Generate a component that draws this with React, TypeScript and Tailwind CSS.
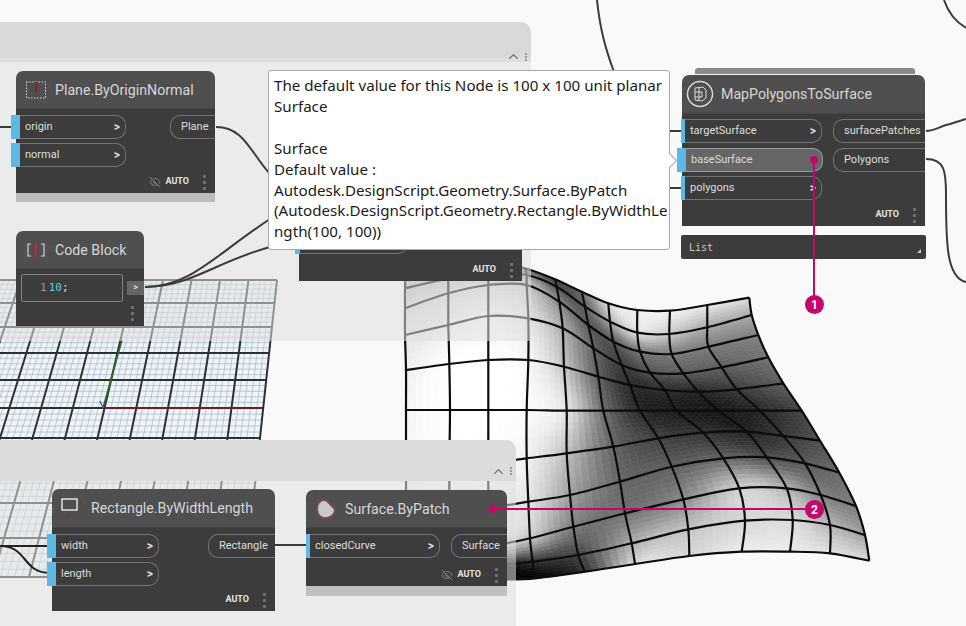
import React from "react";
import { ChevronUp, EyeOff } from "lucide-react";

type Pt = [number, number];
const V: Pt[][] = [
  [[1048,143],[922,165],[810,182],[712,180],[625,160],[545,125],[465,88],[375,55],[265,30],[148,10],[18,-10]],
  [[1055,195],[922,232],[808,252],[712,248],[630,215],[555,170],[470,110],[380,75],[265,65],[145,85],[15,115]],
  [[1075,255],[925,290],[815,312],[720,305],[640,275],[565,225],[478,155],[380,105],[265,105],[145,130],[15,175]],
  [[1105,322],[965,352],[850,370],[750,368],[665,345],[580,295],[488,235],[385,205],[265,198],[145,225],[15,255]],
  [[1150,400],[1010,418],[895,425],[795,420],[690,405],[595,380],[492,350],[385,330],[265,330],[148,342],[18,360]],
  [[1205,482],[1080,482],[955,482],[830,482],[720,482],[610,482],[500,482],[380,480],[265,480],[150,480],[18,480]],
  [[1260,572],[1150,558],[1040,545],[910,548],[775,565],[640,590],[500,610],[380,625],[265,640],[148,655],[18,670]],
  [[1318,668],[1215,640],[1100,622],[970,625],[815,650],[660,695],[510,735],[385,755],[265,775],[148,795],[18,810]],
  [[1368,768],[1262,735],[1160,715],[1018,715],[850,748],[675,790],[520,830],[390,865],[265,890],[150,910],[18,930]],
  [[1395,855],[1290,825],[1178,810],[1035,812],[865,838],[695,880],[535,915],[398,935],[265,950],[150,965],[18,980]],
  [[1408,932],[1290,910],[1170,905],[1025,905],[868,918],[705,942],[555,965],[405,985],[265,990],[148,995],[18,1000]],
];
const B: number[][] = [
  [225,235,245,240,225,110,70,120,170,170,170],
  [170,170,200,220,170,100,80,140,180,190,190],
  [130,125,125,120,90,90,130,190,210,210,210],
  [115,95,90,80,60,100,170,225,240,235,225],
  [95,60,40,45,45,95,195,245,255,255,240],
  [70,40,25,28,40,110,225,250,255,255,245],
  [80,55,35,50,65,100,190,240,250,250,245],
  [105,90,80,100,95,105,160,225,230,230,230],
  [125,130,175,205,140,115,125,195,200,200,200],
  [160,180,215,215,195,170,70,50,0,0,0],
  [215,225,235,235,215,215,50,0,0,0,0],
];
const toReal = (p: Pt): Pt => [400 + p[0] / 3, 250 + p[1] / 3];
const cr = (a: number, b: number, c: number, d: number, t: number) =>
  0.5 * (2 * b + (c - a) * t + (2 * a - 5 * b + 4 * c - d) * t * t + (3 * b - a - 3 * c + d) * t * t * t);
const at = (r: number, c: number) => [Math.min(10, Math.max(0, r)), Math.min(10, Math.max(0, c))];
function sample(get: (r: number, c: number) => number, rf: number, cf: number) {
  const r0 = Math.min(9, Math.floor(rf)), c0 = Math.min(9, Math.floor(cf));
  const v = rf - r0, u = cf - c0;
  const rows = [-1, 0, 1, 2].map((dr) => {
    const vals = [-1, 0, 1, 2].map((dc) => {
      const [r, c] = at(r0 + dr, c0 + dc);
      return get(r, c);
    });
    return cr(vals[0], vals[1], vals[2], vals[3], u);
  });
  return cr(rows[0], rows[1], rows[2], rows[3], v);
}
function buildQuads() {
  const n = 7;
  const N = 10 * n;
  const pts: string[][] = [];
  for (let i = 0; i <= N; i++) {
    pts.push([]);
    for (let j = 0; j <= N; j++) {
      const rf = i / n, cf = j / n;
      const p = toReal([sample((r, c) => V[r][c][0], rf, cf), sample((r, c) => V[r][c][1], rf, cf)]);
      pts[i].push(`${p[0].toFixed(1)},${p[1].toFixed(1)}`);
    }
  }
  const out: { d: string; f: string }[] = [];
  for (let i = 0; i < N; i++)
    for (let j = 0; j < N; j++) {
      const g = Math.round(Math.max(0, Math.min(255, sample((r, c) => B[r][c], (i + 0.5) / n, (j + 0.5) / n))));
      out.push({ d: `M${pts[i][j]}L${pts[i][j + 1]}L${pts[i + 1][j + 1]}L${pts[i + 1][j]}Z`, f: `rgb(${g},${g},${g})` });
    }
  return out;
}
function smooth(pts: Pt[]) {
  const p = pts.map(toReal);
  let d = `M${p[0][0].toFixed(1)},${p[0][1].toFixed(1)}`;
  for (let i = 0; i < p.length - 1; i++) {
    const a = p[Math.max(i - 1, 0)], b = p[i], c = p[i + 1], e = p[Math.min(i + 2, p.length - 1)];
    d += `C${(b[0] + (c[0] - a[0]) / 6).toFixed(1)},${(b[1] + (c[1] - a[1]) / 6).toFixed(1)} ${(c[0] - (e[0] - b[0]) / 6).toFixed(1)},${(c[1] - (e[1] - b[1]) / 6).toFixed(1)} ${c[0].toFixed(1)},${c[1].toFixed(1)}`;
  }
  return d;
}
const quads = buildQuads();
const meshLines = [
  ...V.map((row) => smooth(row)),
  ...V[0].map((_, c) => smooth(V.map((row) => row[c]))),
];

const gridYs = [280, 303, 327, 353, 380, 408, 438, 470, 503, 538, 577];
const gx = (i: number, y: number) => {
  const t = (y - 280) / 297;
  return 277 - 28.5 * i + t * (-32 - 7.5 * i);
};
function planePaths() {
  let minor = "";
  let major = "";
  for (let k = 0; k <= 90; k++) {
    const i = k / 5;
    const seg = `M${gx(i, 280).toFixed(1)},280L${gx(i, 577).toFixed(1)},577`;
    if (k % 5 === 0) major += seg;
    else minor += seg;
  }
  gridYs.forEach((y, idx) => {
    major += `M${gx(0, y).toFixed(1)},${y}L-5,${y}`;
    if (idx < gridYs.length - 1)
      for (let s = 1; s < 5; s++) {
        const yy = y + ((gridYs[idx + 1] - y) * s) / 5;
        minor += `M${gx(0, yy).toFixed(1)},${yy.toFixed(1)}L-5,${yy.toFixed(1)}`;
      }
  });
  return { minor, major };
}
const plane = planePaths();
function Plane() {
  return (
    <g fill="none">
      <polygon points={`${gx(0, 280)},280 ${gx(0, 577)},577 -5,577 -5,280`} fill="#eff4f8" />
      <path d={plane.minor} stroke="#93a7b6" strokeWidth={0.55} />
      <path d={plane.major} stroke="#2c3134" strokeWidth={2} />
      <line x1={103} y1={408} x2={262} y2={408} stroke="#8a1720" strokeWidth={1.6} />
      <line x1={103} y1={408} x2={122} y2={340} stroke="#2f6b2a" strokeWidth={1.6} />
      <line x1={100} y1={401} x2={103} y2={408} stroke="#3a4fc0" strokeWidth={1.2} />
    </g>
  );
}

function Dots() {
  return (
    <div className="flex flex-col gap-[3px]">
      <span className="w-[3px] h-[3px] bg-[#6e6e6e]" />
      <span className="w-[3px] h-[3px] bg-[#6e6e6e]" />
      <span className="w-[3px] h-[3px] bg-[#6e6e6e]" />
    </div>
  );
}
function Footer({ eye }: { eye?: boolean }) {
  return (
    <div className="mt-auto flex items-center justify-end h-[22px] pr-[9px]">
      {eye && <EyeOff size={12} strokeWidth={1.2} className="text-[#a8a8a8] mr-[4px]" />}
      <span className="text-[9px] font-bold text-[#e4e4e4]">AUTO</span>
      <span className="ml-[14px]"><Dots /></span>
    </div>
  );
}
function In({ label, w, blue = "w-[9px] -ml-[5px]", active }: { label: string; w: string; blue?: string; active?: boolean }) {
  return (
    <div className="flex h-[24px]">
      <span className={`${blue} bg-[#5db8e3] shrink-0`} />
      <div className={`${w} flex items-center justify-between pl-[5px] pr-[5px] rounded-r-[10px] border border-l-0 ${active ? "bg-[#666666] border-[#9a9a9a]" : "border-[#737373]"} text-[11px] text-[#dcdcdc]`}>
        <span className="pt-[1px]">{label}</span>
        <span className="text-[12px] font-bold">&gt;</span>
      </div>
    </div>
  );
}
function Out({ label, w }: { label: string; w: string }) {
  return (
    <div className={`${w} h-[24px] flex items-center pl-[10px] pt-[1px] rounded-l-[10px] border border-r-0 border-[#737373] text-[11px] text-[#dcdcdc]`}>
      {label}
    </div>
  );
}
function Header({ title, icon, h = "h-[38px]" }: { title: string; icon: React.ReactNode; h?: string }) {
  return (
    <div className={`${h} rounded-t-[7px] bg-[#4f4f4f] flex items-center border-b border-[#464646]`}>
      <div className="w-[39px] shrink-0 flex justify-center">{icon}</div>
      <span className="pt-[2px] text-[14.2px] text-[#d6d6d6] whitespace-nowrap">{title}</span>
    </div>
  );
}

function App() {
  return (
    <div className="relative w-[966px] h-[626px] overflow-hidden bg-[#f9f9f9] font-['Roboto','Noto_Sans',sans-serif]">
      <svg className="absolute inset-0" width={966} height={626} viewBox="0 0 966 626">
        <Plane />
        <g>
          {quads.map((q, i) => (
            <path key={i} d={q.d} fill={q.f} stroke={q.f} strokeWidth={0.6} />
          ))}
          <g fill="none" stroke="#0c0c0c" strokeWidth={2.2} strokeLinejoin="round">
            {meshLines.map((d, i) => <path key={i} d={d} />)}
          </g>
        </g>
      </svg>

      {/* top group */}
      <div className="absolute left-0 top-[22px] w-[531px] h-[319px] rounded-tr-[10px] bg-[rgba(224,224,224,0.55)] flex flex-col overflow-hidden">
        <div className="h-[36px] bg-[#d9d9d9] shrink-0" />
        <div className="h-[4px] bg-[#dfdfdf] shrink-0 flex justify-end relative">
          <div className="absolute right-[4px] -top-[9px] flex items-center gap-[4px] text-[#6a6a6a]">
            <ChevronUp size={15} strokeWidth={2} />
            <div className="flex flex-col gap-[1px]">
              <span className="w-[2px] h-[2px] bg-[#9a9a9a]" />
              <span className="w-[2px] h-[2px] bg-[#9a9a9a]" />
              <span className="w-[2px] h-[2px] bg-[#9a9a9a]" />
            </div>
          </div>
        </div>
      </div>

      {/* bottom group */}
      <div className="absolute left-0 top-[440px] w-[516px] h-[186px] rounded-tr-[10px] bg-[rgba(224,224,224,0.55)] flex flex-col overflow-hidden">
        <div className="h-[41px] bg-[#dcdcdc] shrink-0 flex items-end justify-end pr-[4px] pb-[2px] text-[#6a6a6a] gap-[4px]">
          <ChevronUp size={15} strokeWidth={2} />
          <div className="flex flex-col gap-[1px] pb-[4px]">
            <span className="w-[2px] h-[2px] bg-[#9a9a9a]" />
            <span className="w-[2px] h-[2px] bg-[#9a9a9a]" />
            <span className="w-[2px] h-[2px] bg-[#9a9a9a]" />
          </div>
        </div>
      </div>

      {/* wires */}
      <svg className="absolute inset-0" width={966} height={626} viewBox="0 0 966 626" fill="none" stroke="#3b3b3b" strokeWidth={2}>
        <path d="M597,0 C600,30 606,50 614,72" />
        <path d="M944,0 C948,12 956,22 966,28" />
        <path d="M926,131 C935,131 940,126 950,124 L966,119" />
        <path d="M926,159 C945,159 946,172 946,195 C946,240 946,278 966,282" />
        <path d="M216,127 C244,127 250,152 270,174" />
        <path d="M0,127 L14,127" />
        <path d="M145,287 C190,287 215,255 270,219" />
        <path d="M145,287 C190,287 215,262 270,247" />
        <path d="M665,131 L682,131" />
        <path d="M665,188 L682,188" />
        <path d="M0,546 L50,546" stroke="#222" />
        <path d="M0,546 C28,546 22,573 50,573" stroke="#222" />
        <path d="M274,545 L308,545" />
      </svg>

      {/* Plane.ByOriginNormal */}
      <div className="absolute left-[16px] top-[71px] w-[199px] h-[131px] flex flex-col">
        <Header
          title="Plane.ByOriginNormal"
          icon={
            <svg width="22" height="20" viewBox="0 0 22 20" fill="none">
              <rect x="1.5" y="2" width="19" height="16" stroke="#d8d8d8" strokeDasharray="1.5 1.5" />
              <rect x="10" y="2" width="2.5" height="10" fill="#8c2530" />
            </svg>
          }
        />
        <div className="flex-1 bg-[#3c3c3c] flex flex-col">
          <div className="flex justify-between pt-[6px]">
            <div className="flex flex-col gap-[4px]">
              <In label="origin" w="w-[106px]" />
              <In label="normal" w="w-[106px]" />
            </div>
            <Out label="Plane" w="w-[45px]" />
          </div>
          <Footer eye />
        </div>
        <div className="h-[9px] bg-[#bdbdbd]" />
      </div>

      {/* Code Block */}
      <div className="absolute left-[16px] top-[231px] w-[128px] h-[95px] flex flex-col">
        <Header
          title="Code Block"
          icon={
            <svg width="20" height="14" viewBox="0 0 20 14" fill="none">
              <path d="M5,1 H2 V13 H5 M15,1 H18 V13 H15" stroke="#cfcfcf" strokeWidth="1.2" />
              <rect x="8.5" y="1" width="2.5" height="13" fill="#a8323c" />
            </svg>
          }
        />
        <div className="flex-1 bg-[#3c3c3c] flex flex-col">
          <div className="flex pt-[5px] pl-[5px] items-center">
            <div className="w-[102px] h-[28px] border border-[#858585] rounded-[2px] flex items-center pl-[18px] gap-[2px] font-['DejaVu_Sans_Mono',monospace] text-[11px]">
              <span className="text-[#9a9a9a]">1</span>
              <span><span className="text-[#6cc0e8]">10</span><span className="text-[#e0e0e0]">;</span></span>
            </div>
            <div className="ml-[4px] w-[17px] h-[14px] bg-[#666666] flex items-center justify-center text-[9px] font-bold text-[#dcdcdc]">&gt;</div>
          </div>
          <div className="mt-auto flex justify-end pr-[10px] pb-[5px]"><Dots /></div>
        </div>
      </div>

      {/* node under the tooltip */}
      <div className="absolute left-[299px] top-[200px] w-[223px] h-[81px] bg-[#3c3c3c] flex flex-col">
        <div className="pt-[30px]">
          <In label="" w="w-[108px]" blue="w-[5px] -ml-[4px]" />
        </div>
        <Footer />
      </div>

      {/* MapPolygonsToSurface */}
      <div className="absolute left-[695px] top-[68px] w-[220px] h-[6px] rounded-t-[3px] bg-[#8a8a8a]" />
      <div className="absolute left-[682px] top-[75px] w-[243px] h-[151px] flex flex-col">
        <Header
          h="h-[39px]"
          title="MapPolygonsToSurface"
          icon={
            <svg width="28" height="28" viewBox="0 0 28 28" fill="none" stroke="#dcdcdc" className="-ml-[3px]">
              <circle cx="14" cy="14" r="12.5" strokeWidth="1.4" />
              <path d="M9,8 L17,7 L20,10 L20,18 L16,21 L9,20 Z M9,12 H16 V17 H9 M13,7.5 V20.5" strokeWidth="1" />
            </svg>
          }
        />
        <div className="flex-1 bg-[#3c3c3c] flex flex-col">
          <div className="flex justify-between pt-[5px]">
            <div className="flex flex-col gap-[4.5px]">
              <In label="targetSurface" w="w-[137px]" blue="w-[4px] -ml-[1px]" />
              <In label="baseSurface" w="w-[137px]" blue="w-[9px] -ml-[5px]" active />
              <In label="polygons" w="w-[137px]" blue="w-[4px] -ml-[1px]" />
            </div>
            <div className="flex flex-col gap-[4.5px]">
              <Out label="surfacePatches" w="w-[92px]" />
              <Out label="Polygons" w="w-[92px]" />
            </div>
          </div>
          <Footer />
        </div>
      </div>
      <div className="absolute left-[681px] top-[235px] w-[245px] h-[24px] bg-[#3c3c3c] rounded-[2px] flex items-center justify-between pl-[8px] pr-[5px] font-['DejaVu_Sans_Mono',monospace] text-[10px] text-[#c8c8c8]">
        <span>List</span>
        <span className="mt-[8px] w-0 h-0 border-l-[4px] border-l-transparent border-b-[4px] border-b-[#c8c8c8]" />
      </div>

      {/* Rectangle.ByWidthLength */}
      <div className="absolute left-[52px] top-[489px] w-[223px] h-[122px] flex flex-col">
        <Header
          h="h-[39px]"
          title="Rectangle.ByWidthLength"
          icon={
            <svg width="24" height="22" viewBox="0 0 24 22" fill="none">
              <rect x="2" y="2" width="15" height="11" stroke="#e2e2e2" strokeWidth="1.5" />
              <rect x="7" y="16" width="4" height="3" fill="#6d3a40" />
              <rect x="19" y="3" width="2" height="4" fill="#6d3a40" />
            </svg>
          }
        />
        <div className="flex-1 bg-[#3c3c3c] flex flex-col">
          <div className="flex justify-between pt-[6px]">
            <div className="flex flex-col gap-[4px]">
              <In label="width" w="w-[103px]" />
              <In label="length" w="w-[103px]" />
            </div>
            <Out label="Rectangle" w="w-[67px]" />
          </div>
          <Footer />
        </div>
      </div>

      {/* Surface.ByPatch */}
      <div className="absolute left-[306px] top-[490px] w-[201px] h-[106px] flex flex-col">
        <Header
          title="Surface.ByPatch"
          icon={
            <svg width="24" height="24" viewBox="0 0 24 24">
              <path d="M9,3 C14,2 15,7 19,10 C23,13 20,20 13,21 C7,22 3,18 3,12 C3,7 5,4 9,3 Z" fill="#c9c9c9" stroke="#7a4a50" strokeWidth="2" />
            </svg>
          }
        />
        <div className="flex-1 bg-[#3c3c3c] flex flex-col">
          <div className="flex justify-between pt-[6px]">
            <In label="closedCurve" w="w-[130px]" blue="w-[4px]" />
            <Out label="Surface" w="w-[56px]" />
          </div>
          <Footer eye />
        </div>
        <div className="h-[10px] bg-[#c0c0c0]" />
      </div>

      {/* tooltip */}
      <div className="absolute left-[268px] top-[70px] w-[402px] h-[180px] bg-white border border-[#a8a8a8] rounded-[3px] pl-[5px] pt-[4px] font-['Noto_Sans',sans-serif] text-[15.15px] leading-[20.9px] text-[#1a1a1a] whitespace-nowrap">
        <div>The default value for this Node is 100 x 100 unit planar</div>
        <div>Surface</div>
        <div className="h-[20.9px]" />
        <div>Surface</div>
        <div>Default value :</div>
        <div>Autodesk.DesignScript.Geometry.Surface.ByPatch</div>
        <div>(Autodesk.DesignScript.Geometry.Rectangle.ByWidthLe</div>
        <div>ngth(100, 100))</div>
        <span className="absolute -right-[6px] top-[84px] w-[11px] h-[11px] rotate-45 bg-white border-t border-r border-[#a8a8a8]" />
      </div>

      {/* annotations */}
      <svg className="absolute inset-0" width={966} height={626} viewBox="0 0 966 626">
        <line x1={814} y1={160} x2={814} y2={305} stroke="#c4066e" strokeWidth={2} />
        <circle cx={814} cy={160} r={4} fill="#c4066e" />
        <line x1={493} y1={509} x2={814} y2={509} stroke="#c4066e" strokeWidth={2} />
        <circle cx={493} cy={509} r={4} fill="#c4066e" />
      </svg>
      <div className="absolute left-[805px] top-[295px] w-[19px] h-[19px] rounded-full bg-[#c4066e] flex items-center justify-center text-white text-[12px] font-bold">1</div>
      <div className="absolute left-[805px] top-[500px] w-[19px] h-[19px] rounded-full bg-[#c4066e] flex items-center justify-center text-white text-[12px] font-bold">2</div>
    </div>
  );
}
export default App;
